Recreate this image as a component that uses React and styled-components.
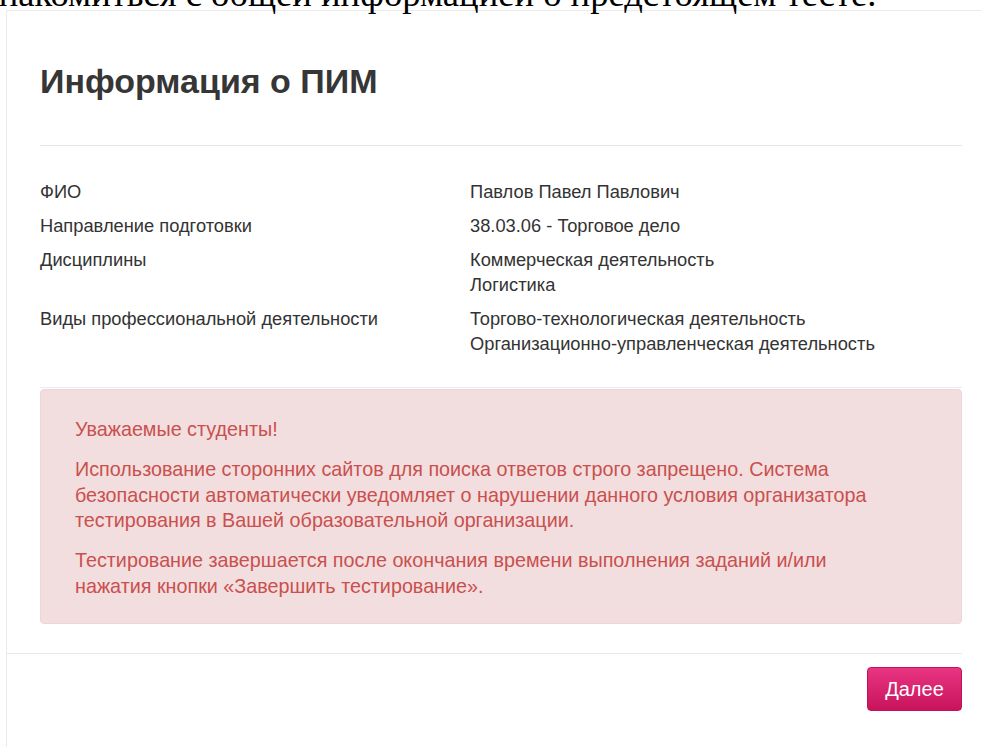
import React from "react";
import styled, { createGlobalStyle } from "styled-components";

const Global = createGlobalStyle`
  html, body {
    margin: 0;
    padding: 0;
    background: #fff;
    overflow: hidden;
  }
  body {
    font-family: "Liberation Serif", "Times New Roman", serif;
  }
`;

const Page = styled.div`
  width: 981px;
  height: 747px;
  overflow: hidden;
`;

const Intro = styled.p`
  margin: -21px 0 0 -34px;
  font-size: 36.6px;
  line-height: 30px;
  white-space: nowrap;
  color: #000;
`;

const Card = styled.section`
  margin: 1px 0 0 6px;
  width: 1000px;
  border: 1px solid #ebebeb;
  border-right: none;
  background: #fff;
  font-family: "Liberation Sans", Arial, sans-serif;
  color: #333;
`;

const Body = styled.div`
  padding: 0 0 29px 33px;
  width: 922px;
`;

const Title = styled.h1`
  margin: 0;
  padding: 50px 0 44px;
  font-size: 34px;
  line-height: 40px;
  font-weight: 700;
  color: #363636;
  border-bottom: 1px solid #e6e6e6;
`;

const InfoList = styled.dl`
  display: grid;
  grid-template-columns: 430px 1fr;
  row-gap: 9px;
  margin: 0;
  padding: 33px 0 31px;
  font-size: 18.3px;
  line-height: 25px;
  color: #333;
  border-bottom: 1px solid #e8ebef;
`;

const Term = styled.dt`
  margin: 0;
`;

const Value = styled.dd`
  margin: 0;
`;

const Alert = styled.div`
  margin-top: 1px;
  padding: 27px 70px 24px 34px;
  background: #f2dede;
  border: 1px solid #efd5d8;
  border-radius: 4px;
  color: #c9504f;
  font-size: 19.75px;
  line-height: 25.5px;
`;

const AlertParagraph = styled.p`
  margin: 0;
  & + & {
    margin-top: ${(p) => p.$gap || 7}px;
  }
`;

const Footer = styled.div`
  display: flex;
  justify-content: flex-end;
  width: 955px;
  padding: 13px 0 40px;
  border-top: 1px solid #e8e8e8;
`;

const Button = styled.button`
  width: 95px;
  height: 44px;
  border: 1px solid #c0125a;
  border-radius: 4px;
  background: linear-gradient(#e93582, #c8135c);
  color: #fff;
  font-family: "Liberation Sans", Arial, sans-serif;
  font-size: 20px;
  cursor: pointer;
`;

const info = [
  { label: "ФИО", values: ["Павлов Павел Павлович"] },
  { label: "Направление подготовки", values: ["38.03.06 - Торговое дело"] },
  { label: "Дисциплины", values: ["Коммерческая деятельность", "Логистика"] },
  {
    label: "Виды профессиональной деятельности",
    values: [
      "Торгово-технологическая деятельность",
      "Организационно-управленческая деятельность",
    ],
  },
];

export default function App() {
  return (
    <Page>
      <Global />
      <Intro>ознакомиться с общей информацией о предстоящем тесте.</Intro>
      <Card>
        <Body>
          <Title>Информация о ПИМ</Title>
          <InfoList>
            {info.map((row) => (
              <React.Fragment key={row.label}>
                <Term>{row.label}</Term>
                <Value>
                  {row.values.map((v) => (
                    <div key={v}>{v}</div>
                  ))}
                </Value>
              </React.Fragment>
            ))}
          </InfoList>
          <Alert>
            <AlertParagraph>Уважаемые студенты!</AlertParagraph>
            <AlertParagraph>
              Использование сторонних сайтов для поиска ответов строго запрещено. Система
              безопасности автоматически уведомляет о нарушении данного условия организатора
              тестирования в Вашей образовательной организации.
            </AlertParagraph>
            <AlertParagraph $gap={14.5}>
              Тестирование завершается после окончания времени выполнения заданий и/или
              нажатия кнопки «Завершить тестирование».
            </AlertParagraph>
          </Alert>
        </Body>
        <Footer>
          <Button>Далее</Button>
        </Footer>
      </Card>
    </Page>
  );
}
